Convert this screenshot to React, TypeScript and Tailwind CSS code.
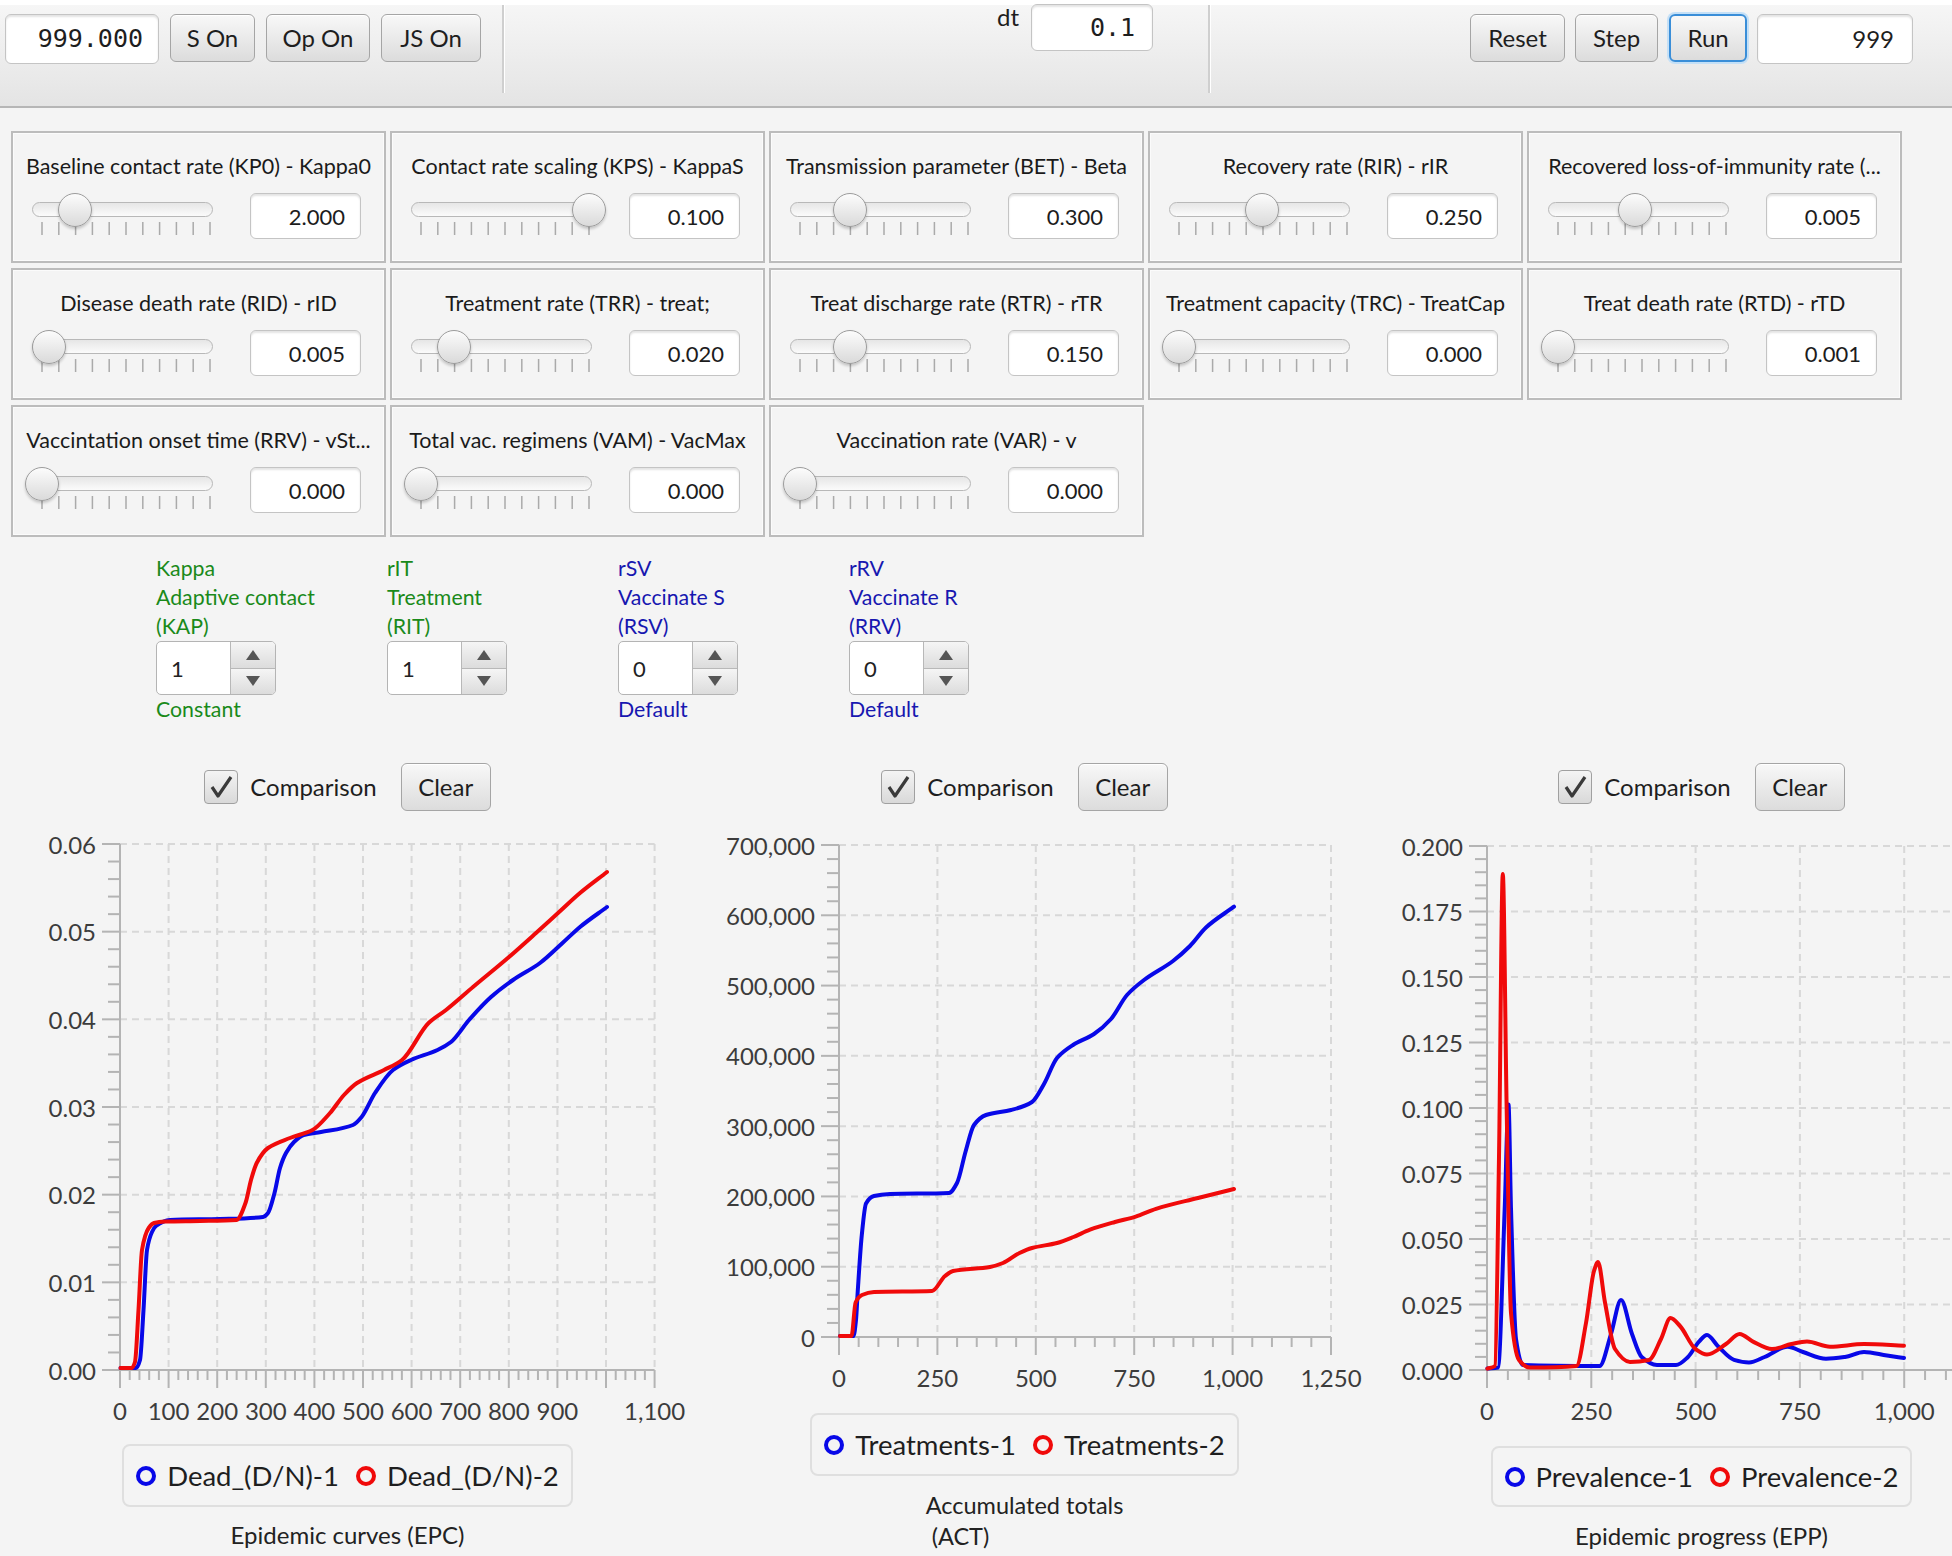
import React from 'react'
import clsx from 'clsx'

// ---------- data ----------

type Param = { t: string; v: string; f: number }

const params: Param[] = [
  { t: 'Baseline contact rate (KP0) - Kappa0', v: '2.000', f: 0.196 },
  { t: 'Contact rate scaling (KPS) - KappaS', v: '0.100', f: 1 },
  { t: 'Transmission parameter (BET) - Beta', v: '0.300', f: 0.3 },
  { t: 'Recovery rate (RIR) - rIR', v: '0.250', f: 0.494 },
  { t: 'Recovered loss-of-immunity rate (...', v: '0.005', f: 0.458 },
  { t: 'Disease death rate (RID) - rID', v: '0.005', f: 0.04 },
  { t: 'Treatment rate (TRR) - treat;', v: '0.020', f: 0.196 },
  { t: 'Treat discharge rate (RTR) - rTR', v: '0.150', f: 0.3 },
  { t: 'Treatment capacity (TRC) - TreatCap', v: '0.000', f: 0 },
  { t: 'Treat death rate (RTD) - rTD', v: '0.001', f: 0 },
  { t: 'Vaccintation onset time (RRV) - vSt...', v: '0.000', f: 0 },
  { t: 'Total vac. regimens (VAM) - VacMax', v: '0.000', f: 0 },
  { t: 'Vaccination rate (VAR) - v', v: '0.000', f: 0 },
]

const spinners = [
  { lines: ['Kappa', 'Adaptive contact', '(KAP)'], v: '1', foot: 'Constant', color: 'text-[#1a8a1a]' },
  { lines: ['rIT', 'Treatment', '(RIT)'], v: '1', foot: '', color: 'text-[#1a8a1a]' },
  { lines: ['rSV', 'Vaccinate S', '(RSV)'], v: '0', foot: 'Default', color: 'text-[#1717b0]' },
  { lines: ['rRV', 'Vaccinate R', '(RRV)'], v: '0', foot: 'Default', color: 'text-[#1717b0]' },
]

type Axis = { o: number; k: number; max: number; major: number; minor: number; labels: (string | null)[] }
type Series = { color: string; pts: number[][] }
type ChartCfg = { h: number; left: number; top: number; x: Axis; y: Axis; series: Series[] }

const BLUE = '#0808e8'
const RED = '#f00a0a'

// curve points are in page pixels, shifted by the chart origin when drawn
const epc: ChartCfg = {
  h: 604,
  left: 9,
  top: 824,
  x: { o: 111, k: 0.486, max: 1100, major: 100, minor: 20, labels: ['0', '100', '200', '300', '400', '500', '600', '700', '800', '900', null, '1,100'] },
  y: { o: 546, k: 526 / 0.06, max: 0.06, major: 0.01, minor: 0.002, labels: ['0.00', '0.01', '0.02', '0.03', '0.04', '0.05', '0.06'] },
  series: [
    {
      color: BLUE,
      pts: [[120.5, 1368], [136, 1368], [140, 1360], [143.5, 1310], [147, 1250], [152, 1232], [156, 1226], [170, 1220], [220, 1219], [263, 1217], [268, 1213], [274.5, 1193], [280, 1168], [286, 1153], [294, 1142], [303.6, 1135], [321, 1132], [353, 1125], [361.6, 1117], [375, 1093], [393, 1070], [411, 1060], [437.5, 1050], [451, 1042], [469, 1020], [491, 997], [513, 980], [540, 963], [562.5, 943], [580, 927], [607, 907]],
    },
    {
      color: RED,
      pts: [[120.5, 1368], [131.7, 1368], [135, 1362], [138.5, 1310], [142, 1250], [148.7, 1228], [154, 1223], [165, 1221.5], [200, 1221], [236.6, 1220], [245.5, 1203], [251, 1180], [256.7, 1163], [268, 1148], [290, 1138], [312.5, 1130], [330, 1113], [344, 1095], [357, 1083], [384, 1070], [402, 1060], [428.6, 1023], [446, 1010], [473, 987], [509, 957], [536, 933], [558, 913], [580, 893], [607, 872]],
    },
  ],
}

const act: ChartCfg = {
  h: 571,
  left: 686,
  top: 824,
  x: { o: 153, k: 0.3936, max: 1250, major: 250, minor: 50, labels: ['0', '250', '500', '750', '1,000', '1,250'] },
  y: { o: 513, k: 492 / 700000, max: 700000, major: 100000, minor: 20000, labels: ['0', '100,000', '200,000', '300,000', '400,000', '500,000', '600,000', '700,000'] },
  series: [
    {
      color: BLUE,
      pts: [[840, 1336], [853.5, 1336], [856, 1320], [857.7, 1292], [861.8, 1235], [866, 1203.5], [874, 1196], [890, 1194], [949, 1193], [957, 1183], [965.6, 1151.5], [974, 1125], [986, 1115], [1011, 1110], [1032, 1102], [1044, 1084], [1057, 1058], [1073, 1045], [1094, 1034], [1111, 1019], [1127, 995], [1144, 980], [1173, 961], [1190, 946], [1206, 927.5], [1234, 906.7]],
    },
    {
      color: RED,
      pts: [[840, 1336], [851.5, 1336], [855.6, 1302.5], [862, 1295], [874, 1292], [932, 1291], [945, 1276], [953, 1271], [990, 1267], [1003, 1263], [1019.5, 1253], [1032, 1248], [1057, 1243], [1073.5, 1237], [1090, 1229.6], [1115, 1222], [1135.7, 1216.6], [1156, 1208.8], [1198, 1198], [1234, 1189]],
    },
  ],
}

const epp: ChartCfg = {
  h: 604,
  left: 1363,
  top: 824,
  x: { o: 124, k: 0.4172, max: 1250, major: 250, minor: 50, labels: ['0', '250', '500', '750', '1,000', null] },
  y: { o: 546, k: 524 / 0.2, max: 0.2, major: 0.025, minor: 0.005, labels: ['0.000', '0.025', '0.050', '0.075', '0.100', '0.125', '0.150', '0.175', '0.200'] },
  series: [
    {
      color: BLUE,
      pts: [[1487.4, 1368.6], [1498, 1367.6], [1504.7, 1208.7], [1508.5, 1104.6], [1511, 1208.7], [1516, 1339], [1523, 1365], [1599.5, 1366], [1611, 1334], [1621, 1300], [1632, 1334], [1641.7, 1357], [1657, 1365], [1676, 1365], [1688, 1357], [1699, 1341.6], [1707, 1335], [1718.5, 1346.8], [1734, 1359.8], [1749, 1362.4], [1764.6, 1357], [1787.6, 1346.8], [1803, 1352], [1826, 1358.8], [1845, 1357], [1864, 1352], [1887, 1355.6], [1904, 1358]],
    },
    {
      color: RED,
      pts: [[1487.4, 1368.6], [1495, 1366], [1499, 1157], [1502.8, 874], [1506.6, 1104.6], [1511, 1313], [1519, 1360], [1530, 1367.6], [1576.5, 1366], [1586, 1323], [1594, 1271], [1598, 1262], [1605, 1302.5], [1615, 1349], [1630, 1362], [1649, 1360], [1661, 1339], [1670.5, 1318], [1680, 1326], [1695.5, 1349], [1707, 1354.6], [1726, 1344], [1739.6, 1334], [1753, 1341.6], [1772, 1349], [1791.5, 1344], [1807, 1341.6], [1830, 1346.8], [1864, 1344], [1904, 1345.7]],
    },
  ],
}

// monotone cubic through the points, so the steps don't overshoot
function monotonePath(p: number[][]) {
  const n = p.length
  const m: number[] = []
  for (let i = 0; i < n - 1; i++) m.push((p[i + 1][1] - p[i][1]) / (p[i + 1][0] - p[i][0]))
  const t: number[] = [m[0]]
  for (let i = 1; i < n - 1; i++) {
    const d0 = p[i][0] - p[i - 1][0]
    const d1 = p[i + 1][0] - p[i][0]
    if (m[i - 1] * m[i] <= 0) t.push(0)
    else t.push((3 * (d0 + d1)) / ((2 * d1 + d0) / m[i - 1] + (d1 + 2 * d0) / m[i]))
  }
  t.push(m[n - 2])
  let d = `M${p[0][0]},${p[0][1]}`
  for (let i = 0; i < n - 1; i++) {
    const dx = (p[i + 1][0] - p[i][0]) / 3
    d += ` C${p[i][0] + dx},${p[i][1] + t[i] * dx} ${p[i + 1][0] - dx},${p[i + 1][1] - t[i + 1] * dx} ${p[i + 1][0]},${p[i + 1][1]}`
  }
  return d
}

const steps = (max: number, step: number) => Array.from({ length: Math.round(max / step) + 1 }, (_, i) => i * step)

// ---------- pieces ----------

function Btn({ children, className, focus }: { children: React.ReactNode; className?: string; focus?: boolean }) {
  return (
    <button
      className={clsx(
        'h-[48px] rounded-[6px] bg-linear-to-b from-[#f8f8f8] to-[#dcdcdc] text-[24px] text-[#1e1e1e]',
        focus ? 'border-2 border-[#3a8ed8] shadow-[0_0_0_2px_#c4e0f7]' : 'border-[1.5px] border-[#a5a5a5] shadow-[inset_0_1px_0_#ffffff]',
        className,
      )}
    >
      {children}
    </button>
  )
}

function Field({ children, className }: { children: React.ReactNode; className?: string }) {
  return (
    <div className={clsx('flex items-center justify-end rounded-[6px] border-[1.5px] border-[#c4c4c4] bg-white shadow-[inset_0_2px_2px_#e4e4e4]', className)}>
      {children}
    </div>
  )
}

function Slider({ f }: { f: number }) {
  return (
    <div className="relative h-[46px] w-[181px]">
      <div className="absolute left-0 top-[9px] h-[15px] w-[181px] rounded-full border-[1.5px] border-[#b8b8b8] bg-linear-to-b from-[#e6e6e6] to-[#fbfbfb]" />
      <svg className="absolute left-0 top-[29px]" width="181" height="13">
        {Array.from({ length: 11 }, (_, i) => (
          <line key={i} x1={10 + i * 16.8} x2={10 + i * 16.8} y1="0" y2="13" stroke="#aaaaaa" strokeWidth="1.5" />
        ))}
      </svg>
      <div
        className="absolute top-[0px] h-[34px] w-[34px] rounded-full border-[1.5px] border-[#9c9c9c] bg-linear-to-b from-[#fcfcfc] to-[#dadada] shadow-[0_2px_3px_rgba(0,0,0,0.2)]"
        style={{ left: 10 + f * 168 - 17 }}
      />
    </div>
  )
}

function ParamBox({ p }: { p: Param }) {
  return (
    <div className="h-[132px] w-[375px] border-2 border-[#bcbcbc] bg-[#f4f4f4] shadow-[inset_0_0_0_1px_#fbfbfb]">
      <div className="mt-[18px] truncate px-[8px] text-center text-[21.5px] leading-[30px] text-[#1a1a1a]">{p.t}</div>
      <div className="mt-[12px] flex">
        <div className="ml-[19px]">
          <Slider f={p.f} />
        </div>
        <Field className="ml-[37px] h-[46px] w-[111px] pr-[15px] text-[22px] text-[#1c1c1c]">{p.v}</Field>
      </div>
    </div>
  )
}

function Arrow({ up }: { up?: boolean }) {
  return (
    <div className={clsx('flex flex-1 items-center justify-center bg-linear-to-b from-[#f5f5f5] to-[#dcdcdc]', up && 'border-b border-[#b8b8b8]')}>
      <svg width="14" height="10">
        <polygon points={up ? '0,10 7,0 14,10' : '0,0 14,0 7,10'} fill="#555555" />
      </svg>
    </div>
  )
}

function Chart({ c }: { c: ChartCfg }) {
  const xr = c.x.o + c.x.max * c.x.k
  const yb = c.y.o
  const yt = yb - c.y.max * c.y.k
  const X = (v: number) => c.x.o + v * c.x.k
  const Y = (v: number) => yb - v * c.y.k
  return (
    <svg width="677" height={c.h} className="block overflow-visible">
      {/* grid */}
      {steps(c.x.max, c.x.major).slice(1).map((v) => (
        <line key={'gx' + v} x1={X(v)} x2={X(v)} y1={yt} y2={yb} stroke="#d8d8d8" strokeWidth="2" strokeDasharray="7 5" />
      ))}
      {steps(c.y.max, c.y.major).slice(1).map((v) => (
        <line key={'gy' + v} x1={c.x.o} x2={xr} y1={Y(v)} y2={Y(v)} stroke="#d8d8d8" strokeWidth="2" strokeDasharray="7 5" />
      ))}
      {/* ticks */}
      {steps(c.x.max, c.x.minor).map((v, i) => (
        <line key={'tx' + i} x1={X(v)} x2={X(v)} y1={yb} y2={yb + (i % 5 === 0 ? 18 : 10)} stroke="#b4b4b4" strokeWidth="2" />
      ))}
      {steps(c.y.max, c.y.minor).map((v, i) => (
        <line key={'ty' + i} x1={c.x.o - (i % 5 === 0 ? 18 : 12)} x2={c.x.o} y1={Y(v)} y2={Y(v)} stroke="#b4b4b4" strokeWidth="2" />
      ))}
      <line x1={c.x.o} x2={xr} y1={yb} y2={yb} stroke="#b4b4b4" strokeWidth="2" />
      <line x1={c.x.o} x2={c.x.o} y1={yt} y2={yb} stroke="#b4b4b4" strokeWidth="2" />
      {/* labels */}
      {c.x.labels.map((l, i) =>
        l ? (
          <text key={'lx' + i} x={X(i * c.x.major)} y={yb + 40} textAnchor="middle" dominantBaseline="central" fontSize="24" fill="#3c3c3c">
            {l}
          </text>
        ) : null,
      )}
      {c.y.labels.map((l, i) => (
        <text key={'ly' + i} x={c.x.o - 24} y={Y(i * c.y.major)} textAnchor="end" dominantBaseline="central" fontSize="24" fill="#3c3c3c">
          {l}
        </text>
      ))}
      <g transform={`translate(${-c.left},${-c.top})`}>
        {c.series.map((s) => (
          <path key={s.color} d={monotonePath(s.pts)} fill="none" stroke={s.color} strokeWidth="4" strokeLinejoin="round" strokeLinecap="round" />
        ))}
      </g>
    </svg>
  )
}

function Comparison() {
  return (
    <div className="flex h-[74px] items-center justify-center">
      <div className="flex h-[34px] w-[34px] items-center justify-center rounded-[4px] border-[1.5px] border-[#a0a0a0] bg-linear-to-b from-[#f4f4f4] to-[#d9d9d9]">
        <svg width="24" height="24" viewBox="0 0 24 24">
          <path d="M3 12 L9 21 L22 2" fill="none" stroke="#3a3a3a" strokeWidth="3.2" strokeLinejoin="round" />
        </svg>
      </div>
      <span className="ml-[12px] text-[24px] text-[#1e1e1e]">Comparison</span>
      <Btn className="ml-[24px] h-[47px] w-[90px]">Clear</Btn>
    </div>
  )
}

function Legend({ a, b, className }: { a: string; b: string; className?: string }) {
  return (
    <div className={clsx('inline-flex items-center rounded-[8px] border-2 border-[#dfdfdf] pl-[12px] pr-[12px] text-[27.5px] text-[#1e1e1e]', className)}>
      <span className="h-[20px] w-[20px] rounded-full border-[4px] border-[#0808e8]" />
      <span className="ml-[11px]">{a}</span>
      <span className="ml-[17px] h-[20px] w-[20px] rounded-full border-[4px] border-[#f00a0a]" />
      <span className="ml-[11px]">{b}</span>
    </div>
  )
}

// ---------- page ----------

export default function App() {
  return (
    <div className="h-[1556px] w-[1952px] overflow-hidden bg-[#f4f4f4] [font-family:Lato,'Noto_Sans',sans-serif] text-[#1e1e1e]">
      {/* toolbar */}
      <div className="flex h-[108px] items-start border-b-2 border-[#b6b6b6] bg-[linear-gradient(#ffffff_0px,#ffffff_5px,#f6f6f6_5px,#e4e4e4_100%)]">
        <div className="ml-[5px] mt-[14px] flex items-start">
          <Field className="h-[50px] w-[154px] pr-[15px] text-[25px] [font-family:'DejaVu_Sans_Mono',monospace]">999.000</Field>
          <Btn className="ml-[11px] w-[85px]">S On</Btn>
          <Btn className="ml-[11px] w-[104px]">Op On</Btn>
          <Btn className="ml-[11px] w-[100px]">JS On</Btn>
        </div>
        <div className="ml-[21px] mt-[5px] h-[88px] w-[3px] border-l-2 border-r border-l-[#cfcfcf] border-r-white" />
        <div className="ml-[492px] mt-[3px] text-[24px] leading-[28px]">dt</div>
        <Field className="ml-[12px] mt-[4px] h-[47px] w-[122px] pr-[17px] text-[25px] [font-family:'DejaVu_Sans_Mono',monospace]">0.1</Field>
        <div className="ml-[55px] mt-[5px] h-[88px] w-[3px] border-l-2 border-r border-l-[#cfcfcf] border-r-white" />
        <div className="ml-[259px] mt-[14px] flex items-start">
          <Btn className="w-[95px]">Reset</Btn>
          <Btn className="ml-[10px] w-[83px]">Step</Btn>
          <Btn className="ml-[11px] w-[78px]" focus>
            Run
          </Btn>
          <Field className="ml-[10px] h-[50px] w-[156px] pr-[18px] text-[24px]">999</Field>
        </div>
      </div>

      {/* parameters */}
      <div className="ml-[11px] mt-[23px] grid grid-cols-[repeat(5,375px)] gap-x-[4px] gap-y-[5px]">
        {params.map((p) => (
          <ParamBox key={p.t} p={p} />
        ))}
      </div>

      {/* spinners */}
      <div className="ml-[156px] mt-[17px] flex">
        {spinners.map((s) => (
          <div key={s.lines[0]} className={clsx('w-[231px] text-[21.3px] leading-[29px]', s.color)}>
            {s.lines.map((l) => (
              <div key={l}>{l}</div>
            ))}
            <div className="flex h-[54px] w-[120px] overflow-hidden rounded-[5px] border-[1.5px] border-[#b4b4b4] bg-white">
              <div className="flex w-[74px] items-center pl-[14px] text-[22px] text-[#222222]">{s.v}</div>
              <div className="flex w-[45px] flex-col border-l border-[#b8b8b8]">
                <Arrow up />
                <Arrow />
              </div>
            </div>
            <div className="h-[29px]">{s.foot}</div>
          </div>
        ))}
      </div>

      {/* charts */}
      <div className="ml-[9px] mt-[26px] flex">
        <div className="flex w-[677px] shrink-0 flex-col items-center">
          <Comparison />
          <Chart c={epc} />
          <Legend className="mt-[16px] h-[63px]" a="Dead_(D/N)-1" b="Dead_(D/N)-2" />
          <div className="mt-[14px] text-[24px] leading-[28px] text-[#222222]">Epidemic curves (EPC)</div>
        </div>
        <div className="flex w-[677px] shrink-0 flex-col items-center">
          <Comparison />
          <Chart c={act} />
          <Legend className="mt-[18px] h-[63px]" a="Treatments-1" b="Treatments-2" />
          <div className="mt-[14px] text-left text-[23.5px] leading-[31px] text-[#222222]">
            <div>Accumulated totals</div>
            <div>&nbsp;(ACT)</div>
          </div>
        </div>
        <div className="flex w-[677px] shrink-0 flex-col items-center">
          <Comparison />
          <Chart c={epp} />
          <Legend className="mt-[18px] h-[61px]" a="Prevalence-1" b="Prevalence-2" />
          <div className="mt-[15px] text-[24px] leading-[28px] text-[#222222]">Epidemic progress (EPP)</div>
        </div>
      </div>
    </div>
  )
}
